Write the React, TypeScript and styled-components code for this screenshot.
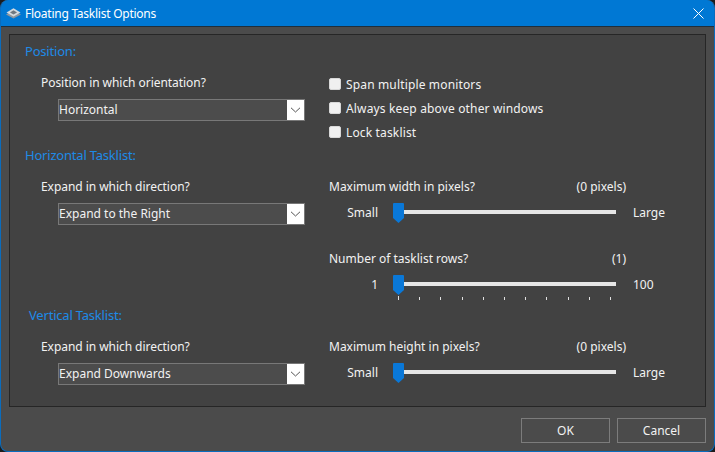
import React from "react";
import styled, { createGlobalStyle } from "styled-components";

const GlobalStyle = createGlobalStyle`
  html, body {
    margin: 0;
    padding: 0;
    background: #1c1c1c;
  }
  body {
    font-family: "Noto Sans", "Open Sans", sans-serif;
    font-size: 12px;
    color: #f2f2f2;
  }
`;

const TICK_COUNT = 11;

const Checkbox = ({ label }: { label: string }) => (
  <CheckRow>
    <CheckBox />
    <span>{label}</span>
  </CheckRow>
);

const Combo = ({ value }: { value: string }) => (
  <ComboBox>
    <ComboValue>{value}</ComboValue>
    <ComboArrow>
      <svg width="11" height="6" viewBox="0 0 11 6">
        <path d="M1 0.8 L5.5 5 L10 0.8" fill="none" stroke="#555" strokeWidth="1" />
      </svg>
    </ComboArrow>
  </ComboBox>
);

type SliderProps = {
  title: string;
  value: string;
  min: string;
  max: string;
  ticks?: boolean;
};

const Slider = ({ title, value, min, max, ticks }: SliderProps) => (
  <SliderBlock>
    <SliderHead>
      <span>{title}</span>
      <span>{value}</span>
    </SliderHead>
    <SliderRow>
      <SliderMin>{min}</SliderMin>
      <Track>
        <Thumb>
          <svg width="11" height="20" viewBox="0 0 11 20">
            <path d="M0 1 Q0 0 1 0 H10 Q11 0 11 1 V15 L5.5 20 L0 15 Z" fill="#0a78d8" />
          </svg>
        </Thumb>
        {ticks && (
          <Ticks>
            {Array.from({ length: TICK_COUNT }).map((_, i) => (
              <Tick key={i} $first={i === 0} />
            ))}
          </Ticks>
        )}
      </Track>
      <SliderMax>{max}</SliderMax>
    </SliderRow>
  </SliderBlock>
);

export default function App() {
  return (
    <Window>
      <GlobalStyle />
      <TitleBar>
        <TitleIcon width="17" height="13" viewBox="0 0 17 13">
          <path d="M8.5 3.5 L16 7.4 L8.5 11.6 L1 7.4 Z" fill="#8f979e" />
          <path d="M8.5 1.2 L15.5 5.4 L8.5 9.4 L1.5 5.4 Z" fill="#d5dade" />
          <path d="M8.5 3.2 L12 5.4 L8.5 7.4 L5 5.4 Z" fill="#6f7880" />
        </TitleIcon>
        <TitleText>Floating Tasklist Options</TitleText>
        <CloseIcon width="11" height="11" viewBox="0 0 11 11">
          <path d="M0.5 0.5 L10.5 10.5 M10.5 0.5 L0.5 10.5" stroke="#fff" strokeWidth="1" />
        </CloseIcon>
      </TitleBar>
      <Client>
        <Panel>
          <Section $height={104}>
            <Heading>Position:</Heading>
            <Columns>
              <LeftColumn>
                <FieldLabel>Position in which orientation?</FieldLabel>
                <Combo value="Horizontal" />
              </LeftColumn>
              <CheckList>
                <Checkbox label="Span multiple monitors" />
                <Checkbox label="Always keep above other windows" />
                <Checkbox label="Lock tasklist" />
              </CheckList>
            </Columns>
          </Section>
          <Section $height={160}>
            <Heading>Horizontal Tasklist:</Heading>
            <Columns>
              <LeftColumn>
                <FieldLabel>Expand in which direction?</FieldLabel>
                <Combo value="Expand to the Right" />
              </LeftColumn>
              <RightColumn>
                <Slider title="Maximum width in pixels?" value="(0 pixels)" min="Small" max="Large" />
                <Slider title="Number of tasklist rows?" value="(1)" min="1" max="100" ticks />
              </RightColumn>
            </Columns>
          </Section>
          <Section $height={92}>
            <Heading $indent>Vertical Tasklist:</Heading>
            <Columns>
              <LeftColumn>
                <FieldLabel>Expand in which direction?</FieldLabel>
                <Combo value="Expand Downwards" />
              </LeftColumn>
              <RightColumn>
                <Slider title="Maximum height in pixels?" value="(0 pixels)" min="Small" max="Large" />
              </RightColumn>
            </Columns>
          </Section>
        </Panel>
        <ButtonRow>
          <Button>OK</Button>
          <Button>Cancel</Button>
        </ButtonRow>
      </Client>
    </Window>
  );
}

const Window = styled.div`
  width: 715px;
  height: 452px;
  box-sizing: border-box;
  display: flex;
  flex-direction: column;
  overflow: hidden;
  background: #4b4b4b;
  border-left: 1px solid #0a6cbd;
  border-right: 1px solid #0a6cbd;
  border-bottom: 1px solid #0a6cbd;
  border-radius: 8px;
`;

const TitleBar = styled.div`
  height: 26px;
  margin: 0 -1px;
  flex: none;
  display: flex;
  align-items: center;
  padding: 0 11px 0 5px;
  background: #0078d4;
  border-bottom: 1px solid #1f2f3c;
`;

const TitleIcon = styled.svg`
  flex: none;
  margin-right: 3px;
`;

const TitleText = styled.div`
  flex: 1;
  color: #fff;
  letter-spacing: -0.25px;
`;

const CloseIcon = styled.svg`
  flex: none;
`;

const Client = styled.div`
  flex: 1;
  display: flex;
  flex-direction: column;
  padding: 7px 8px 8px 8px;
`;

const Panel = styled.div`
  height: 373px;
  box-sizing: border-box;
  padding-top: 6px;
  background: #424242;
  border: 1px solid #262626;
`;

const Section = styled.div<{ $height: number }>`
  height: ${(p) => p.$height}px;
`;

const Heading = styled.div<{ $indent?: boolean }>`
  height: 20px;
  line-height: 20px;
  padding-left: ${(p) => (p.$indent ? 19 : 15)}px;
  font-size: 13px;
  letter-spacing: -0.2px;
  color: #1e8ae6;
`;

const Columns = styled.div`
  display: grid;
  grid-template-columns: 319px 1fr;
  padding-top: 13px;
`;

const LeftColumn = styled.div`
  padding-left: 31px;
`;

const RightColumn = styled.div`
  display: flex;
  flex-direction: column;
  gap: 28px;
`;

const FieldLabel = styled.div`
  height: 18px;
  line-height: 18px;
  margin-bottom: 7px;
  letter-spacing: -0.05px;
`;

const ComboBox = styled.div`
  margin-left: 17px;
  width: 247px;
  height: 22px;
  box-sizing: border-box;
  display: flex;
  background: #4c4c4c;
  border: 1px solid #787878;
`;

const ComboValue = styled.div`
  flex: 1;
  line-height: 20px;
`;

const ComboArrow = styled.div`
  width: 17px;
  display: flex;
  align-items: center;
  justify-content: center;
  background: #fff;
`;

const CheckList = styled.div`
  display: flex;
  flex-direction: column;
  gap: 6px;
  padding-top: 1px;
`;

const CheckRow = styled.div`
  height: 18px;
  display: flex;
  align-items: center;
  gap: 5px;
  letter-spacing: 0.15px;
`;

const CheckBox = styled.div`
  width: 12px;
  height: 12px;
  background: #f0f0f0;
  border-radius: 2px;
  box-sizing: border-box;
  border: 1px solid #d8d8d8;
`;

const SliderBlock = styled.div`
  width: 365px;
`;

const SliderHead = styled.div`
  width: 297px;
  height: 18px;
  line-height: 18px;
  display: flex;
  justify-content: space-between;
`;

const SliderRow = styled.div`
  display: flex;
  align-items: center;
  height: 20px;
  margin-top: 6px;
`;

const SliderMin = styled.div`
  width: 49px;
  text-align: right;
`;

const SliderMax = styled.div`
  margin-left: 17px;
`;

const Track = styled.div`
  position: relative;
  width: 223px;
  height: 4px;
  margin-left: 15px;
  background: #e6e6e6;
`;

const Thumb = styled.div`
  position: absolute;
  left: 0;
  top: -7px;
  height: 20px;
  line-height: 0;
`;

const Ticks = styled.div`
  position: absolute;
  left: 5px;
  right: 5px;
  top: 14px;
  display: flex;
  justify-content: space-between;
`;

const Tick = styled.div<{ $first: boolean }>`
  width: 1px;
  height: ${(p) => (p.$first ? 4 : 3)}px;
  margin-top: ${(p) => (p.$first ? 0 : 1)}px;
  background: #e0e0e0;
`;

const ButtonRow = styled.div`
  display: flex;
  justify-content: flex-end;
  gap: 7px;
  margin-top: 11px;
`;

const Button = styled.div`
  width: 89px;
  height: 25px;
  box-sizing: border-box;
  line-height: 23px;
  text-align: center;
  background: #4b4b4b;
  border: 1px solid #7c7c7c;
`;
